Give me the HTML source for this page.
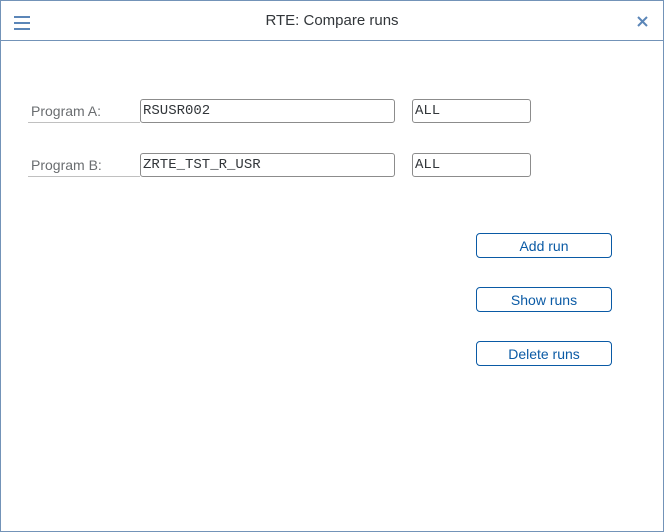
<!DOCTYPE html>
<html><head><style>
*{box-sizing:border-box;margin:0;padding:0}
body{width:664px;height:532px;background:#fff;font-family:"Liberation Sans",sans-serif;position:relative;overflow:hidden}
.win{position:absolute;left:0;top:0;width:664px;height:532px;border:1px solid #7393b8}
.hdr{position:absolute;left:0;top:0;width:664px;height:41px;border-bottom:1px solid #7393b8}
.title{position:absolute;left:0;width:664px;top:12px;text-align:center;font-size:15px;color:#32363a}
.ham{position:absolute;left:14px;top:16px;width:16px}
.ham div{height:2px;background:#5b86b8;margin-bottom:4px}
.lbl{position:absolute;left:28px;width:112px;height:24px;border-bottom:1px solid #c0c0c0;color:#6a6d70;font-size:14px;padding:4px 0 0 3px}
.inp{position:absolute;height:24px;border:1px solid #8c8c8c;border-radius:3px;font-family:"Liberation Mono",monospace;font-size:14px;color:#32363a;padding:3px 0 0 2px}
.btn{position:absolute;left:476px;width:136px;height:25px;border:1px solid #0a5aa5;border-radius:4px;color:#0a5aa5;font-size:14px;text-align:center;line-height:24px}
</style></head><body>
<div class="win"></div>
<div class="hdr"></div>
<div class="ham"><div></div><div></div><div></div></div>
<div class="title">RTE: Compare runs</div>
<svg style="position:absolute;left:637px;top:16px" width="11" height="11"><path d="M1 1L10 10M10 1L1 10" stroke="#5b86b8" stroke-width="2"/></svg>
<div class="lbl" style="top:99px">Program A:</div>
<div class="inp" style="left:140px;top:99px;width:255px">RSUSR002</div>
<div class="inp" style="left:412px;top:99px;width:119px">ALL</div>
<div class="lbl" style="top:153px">Program B:</div>
<div class="inp" style="left:140px;top:153px;width:255px">ZRTE_TST_R_USR</div>
<div class="inp" style="left:412px;top:153px;width:119px">ALL</div>
<div class="btn" style="top:233px">Add run</div>
<div class="btn" style="top:287px">Show runs</div>
<div class="btn" style="top:341px">Delete runs</div>
</body></html>
